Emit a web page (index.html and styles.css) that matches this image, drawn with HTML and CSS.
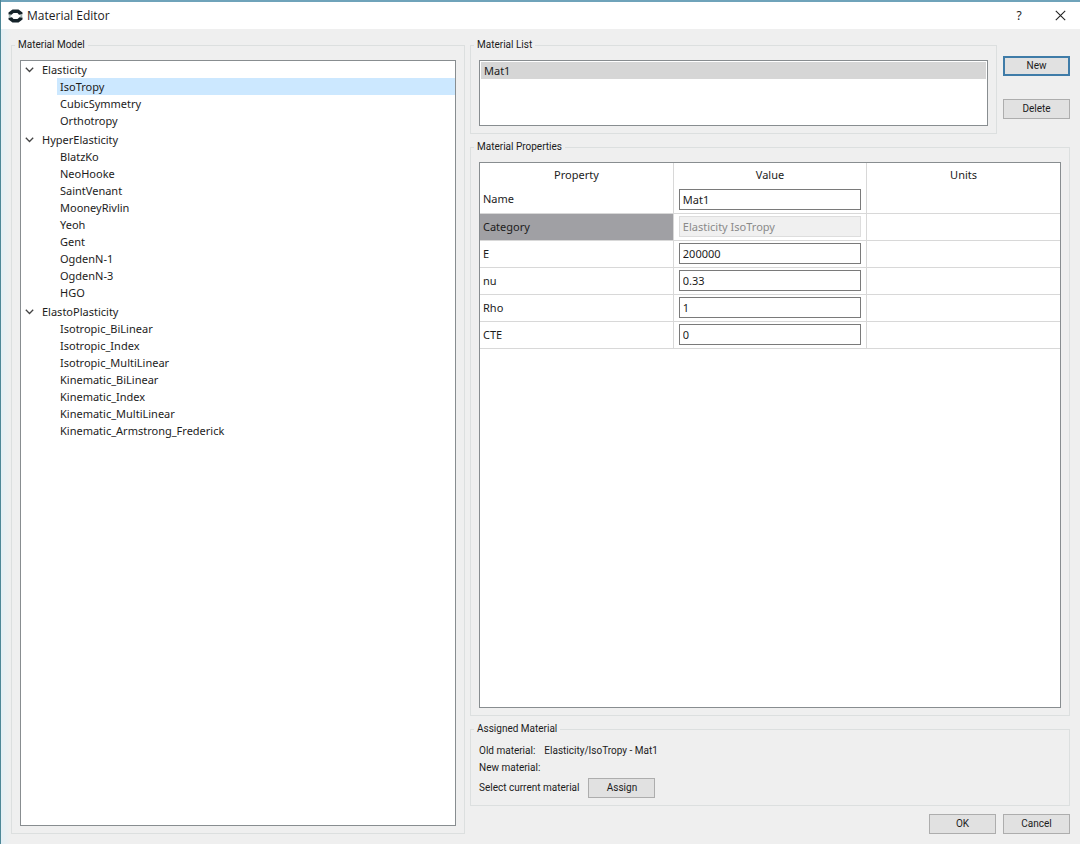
FILE: index.html
```html
<!DOCTYPE html>
<html lang="en">
<head>
<meta charset="utf-8">
<title>Material Editor</title>
<link rel="stylesheet" href="styles.css">
</head>
<body>
<div class="window">
  <header class="titlebar">
    <svg class="logo" width="15" height="14" viewBox="0 0 15 14" aria-hidden="true">
      <path d="M.5 5.400 V3.600 L4.500 .6 H10.500 L14.500 3.600 V5.200 L11 5.800 L9.500 4 H5.500 L3.500 5.800Z" fill="#15232a"/>
      <path d="M14.500 8.600 V10.400 L10.500 13.400 H4.500 L.5 10.400 V8.800 L4 8.200 L5.500 10 H9.500 L11.500 8.200Z" fill="#15232a"/>
      <path d="M.8 6 L3.400 6.400 L2.600 7.600 L.8 8Z M14.200 8 L11.600 7.600 L12.400 6.400 L14.200 6Z" fill="#8fa9a5"/>
    </svg>
    <h1 class="title">Material Editor</h1>
    <button class="title-button" type="button" aria-label="Help">?</button>
    <button class="title-button" type="button" aria-label="Close">
      <svg width="11" height="11" viewBox="0 0 11 11"><path d="M.8 .8 L10.200 10.200 M10.200 .8 L.8 10.200" stroke="#222" stroke-width="1.100" fill="none"/></svg>
    </button>
  </header>

  <main class="content">
    <fieldset class="group">
      <legend>Material Model</legend>
      <ul class="panel tree">
        <li>
          <button class="branch" type="button" aria-expanded="true"><svg class="chevron" width="9" height="6" viewBox="0 0 9 6"><path d="M.8 .8 L4.500 4.500 L8.200 .8"/></svg>Elasticity</button>
          <ul class="leaves">
            <li class="selected">IsoTropy</li>
            <li>CubicSymmetry</li>
            <li>Orthotropy</li>
          </ul>
        </li>
        <li>
          <button class="branch" type="button" aria-expanded="true"><svg class="chevron" width="9" height="6" viewBox="0 0 9 6"><path d="M.8 .8 L4.500 4.500 L8.200 .8"/></svg>HyperElasticity</button>
          <ul class="leaves">
            <li>BlatzKo</li>
            <li>NeoHooke</li>
            <li>SaintVenant</li>
            <li>MooneyRivlin</li>
            <li>Yeoh</li>
            <li>Gent</li>
            <li>OgdenN-1</li>
            <li>OgdenN-3</li>
            <li>HGO</li>
          </ul>
        </li>
        <li>
          <button class="branch" type="button" aria-expanded="true"><svg class="chevron" width="9" height="6" viewBox="0 0 9 6"><path d="M.8 .8 L4.500 4.500 L8.200 .8"/></svg>ElastoPlasticity</button>
          <ul class="leaves">
            <li>Isotropic_BiLinear</li>
            <li>Isotropic_Index</li>
            <li>Isotropic_MultiLinear</li>
            <li>Kinematic_BiLinear</li>
            <li>Kinematic_Index</li>
            <li>Kinematic_MultiLinear</li>
            <li>Kinematic_Armstrong_Frederick</li>
          </ul>
        </li>
      </ul>
    </fieldset>

    <div class="column">
      <div class="list-row">
        <fieldset class="group">
          <legend>Material List</legend>
          <ul class="panel materials">
            <li>Mat1</li>
          </ul>
        </fieldset>
        <div class="list-actions">
          <button class="button primary" type="button">New</button>
          <button class="button" type="button">Delete</button>
        </div>
      </div>

      <fieldset class="group grow">
        <legend>Material Properties</legend>
        <div class="panel">
          <table class="properties">
            <thead>
              <tr><th>Property</th><th>Value</th><th>Units</th></tr>
            </thead>
            <tbody>
              <tr><td><label for="name">Name</label></td><td><input id="name" type="text" value="Mat1"></td><td></td></tr>
              <tr><td class="current"><label for="category">Category</label></td><td><input id="category" type="text" value="Elasticity IsoTropy" disabled></td><td></td></tr>
              <tr><td><label for="e">E</label></td><td><input id="e" type="text" value="200000"></td><td></td></tr>
              <tr><td><label for="nu">nu</label></td><td><input id="nu" type="text" value="0.33"></td><td></td></tr>
              <tr><td><label for="rho">Rho</label></td><td><input id="rho" type="text" value="1"></td><td></td></tr>
              <tr><td><label for="cte">CTE</label></td><td><input id="cte" type="text" value="0"></td><td></td></tr>
            </tbody>
          </table>
        </div>
      </fieldset>

      <fieldset class="group assigned">
        <legend>Assigned Material</legend>
        <p class="line"><span>Old material:</span><span>Elasticity/IsoTropy - Mat1</span></p>
        <p class="line">New material:</p>
        <p class="line"><span>Select current material</span><button class="button" type="button">Assign</button></p>
      </fieldset>

      <div class="dialog-actions">
        <button class="button" type="button">OK</button>
        <button class="button" type="button">Cancel</button>
      </div>
    </div>
  </main>
</div>
</body>
</html>
```
FILE: styles.css
```css
* {
  box-sizing: border-box;
}

body {
  margin: 0;
  background: #efefef;
  color: #1c1c1c;
  font: 10px/14px Roboto, "Noto Sans", sans-serif;
}

ul,
p,
h1 {
  margin: 0;
  padding: 0;
  list-style: none;
  font-weight: 400;
}

button,
input {
  font: inherit;
  color: inherit;
}

.window {
  display: flex;
  flex-direction: column;
  min-height: 100vh;
  border-left: 1px solid #4d8797;
  background: linear-gradient(90deg, #e3eff5, #efefef 10px);
}

.titlebar {
  display: flex;
  align-items: center;
  height: 29px;
  padding: 0 7px;
  border-top: 2px solid #6fa3ba;
  background: #fff;
}

.title {
  flex: 1;
  margin-left: 4px;
  font-family: "Open Sans", "Noto Sans", sans-serif;
  font-size: 12px;
  line-height: 16px;
}

.title-button {
  display: grid;
  place-items: center;
  width: 26px;
  height: 26px;
  margin-left: 15px;
  padding: 0;
  border: 0;
  background: none;
  font-family: "Noto Sans", sans-serif;
  font-size: 12px;
}

.content {
  flex: 1;
  display: grid;
  grid-template-columns: 454fr 600fr;
  gap: 5px;
  padding: 9px 10px 10px 10px;
}

.column {
  display: flex;
  flex-direction: column;
}

.group {
  display: flex;
  flex-direction: column;
  min-width: 0;
  margin: 0;
  padding: 8px 8px 7px;
  border: 1px solid #dcdfdf;
}

.group legend {
  margin-left: -5px;
  padding: 0 3px;
}

.grow {
  flex: 1;
}

.panel {
  flex: 1;
  border: 1px solid #888d90;
  background: #fff;
  font-family: "Noto Sans", "Open Sans", sans-serif;
  font-size: 11px;
}

.branch {
  display: flex;
  align-items: center;
  gap: 8px;
  width: 100%;
  padding: 0 0 0 4px;
  border: 0;
  background: none;
  line-height: 17px;
}

.chevron {
  fill: none;
  stroke: #444;
  stroke-width: 1.3;
}

.leaves {
  margin-left: 36px;
  padding-bottom: 2px;
  line-height: 17px;
}

.leaves li {
  padding-left: 3px;
}

.selected {
  background: #cce8ff;
}

.list-row {
  display: flex;
  gap: 6px;
  height: 96px;
}

.list-row .group {
  flex: 1;
}

.list-actions {
  display: flex;
  flex-direction: column;
  gap: 23px;
  padding-top: 18px;
}

.materials li {
  margin: 1px;
  padding-left: 3px;
  background: #d6d6d6;
  line-height: 17px;
}

.list-row + .group {
  margin-top: 6px;
}

.button {
  width: 67px;
  height: 20px;
  padding: 0;
  border: 1px solid #adadad;
  background: #e1e1e1;
}

.primary {
  border: 2px solid #3f7ca8;
}

.properties {
  width: 100%;
  border-collapse: collapse;
  table-layout: fixed;
}

.properties th,
.properties td {
  height: 27px;
  padding: 0 5px;
  border-right: 1px solid #d8d8d8;
  border-bottom: 1px solid #d8d8d8;
}

.properties th {
  height: 23px;
  border-bottom: 0;
  font-weight: 400;
}

.properties td:first-child {
  padding-left: 3px;
}

.properties th:last-child,
.properties td:last-child {
  border-right: 0;
}

.properties .current {
  background: #a0a0a4;
}

.properties input {
  display: block;
  width: 100%;
  height: 21px;
  padding: 0 3px;
  border: 1px solid #7a7a7a;
  background: #fff;
}

.properties input:disabled {
  border-color: #ddd;
  background: #f0f0f0;
  color: #8a8a8a;
}

.assigned {
  margin-top: 6px;
  gap: 3px;
}

.line {
  display: flex;
  align-items: center;
  gap: 9px;
}

.dialog-actions {
  display: flex;
  justify-content: flex-end;
  gap: 7px;
  margin-top: 8px;
}
```
